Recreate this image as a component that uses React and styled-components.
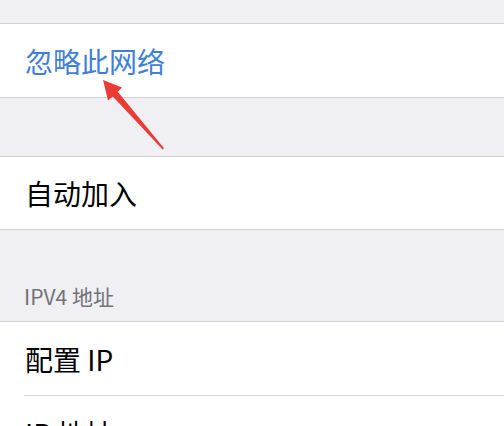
import React from 'react';
import styled, { createGlobalStyle } from 'styled-components';

const GlobalStyle = createGlobalStyle`
  html, body {
    margin: 0;
    padding: 0;
    background: #efeff4;
    overflow: hidden;
  }
`;

const Screen = styled.div`
  position: relative;
  width: 504px;
  height: 426px;
  overflow: hidden;
  background: #efeff4;
  font-family: "Noto Sans CJK SC", "Noto Sans", sans-serif;
  padding-top: 23px;
  box-sizing: border-box;
`;

const Group = styled.div`
  background: #fff;
  border-top: 1px solid #d1d1d6;
  border-bottom: 1px solid #d1d1d6;
`;

const Cell = styled.div`
  height: ${props => props.h || 73}px;
  display: flex;
  align-items: center;
  padding-left: 25px;
  font-size: 28px;
  color: ${props => props.blue ? '#3f7fd8' : '#000'};
`;

const Separator = styled.div`
  height: 1px;
  margin-left: 24px;
  background: #dcdce0;
`;

const Gap = styled.div`
  height: ${props => props.h}px;
`;

const SectionHeader = styled.div`
  height: 91px;
  box-sizing: border-box;
  padding: 53px 0 0 24px;
  font-size: 21px;
  line-height: 26px;
  color: #727277;
`;

const Arrow = styled.svg`
  position: absolute;
  left: 0;
  top: 0;
  pointer-events: none;
`;

export default function App() {
  return (
    <>
      <GlobalStyle />
      <Screen>
        <Group>
          <Cell blue>忽略此网络</Cell>
        </Group>
        <Gap h={58} />
        <Group>
          <Cell h={72}>自动加入</Cell>
        </Group>
        <SectionHeader>IPV4 地址</SectionHeader>
        <Group>
          <Cell>配置 IP</Cell>
          <Separator />
          <Cell>IP 地址</Cell>
        </Group>
        <Arrow width="504" height="426" viewBox="0 0 504 426">
          <polygon
            points="103,80 122,87.5 117.8,91.8 164,148.2 162.6,149.4 112.8,96.4 108,100.5"
            fill="#ea3b36"
          />
        </Arrow>
      </Screen>
    </>
  );
}
